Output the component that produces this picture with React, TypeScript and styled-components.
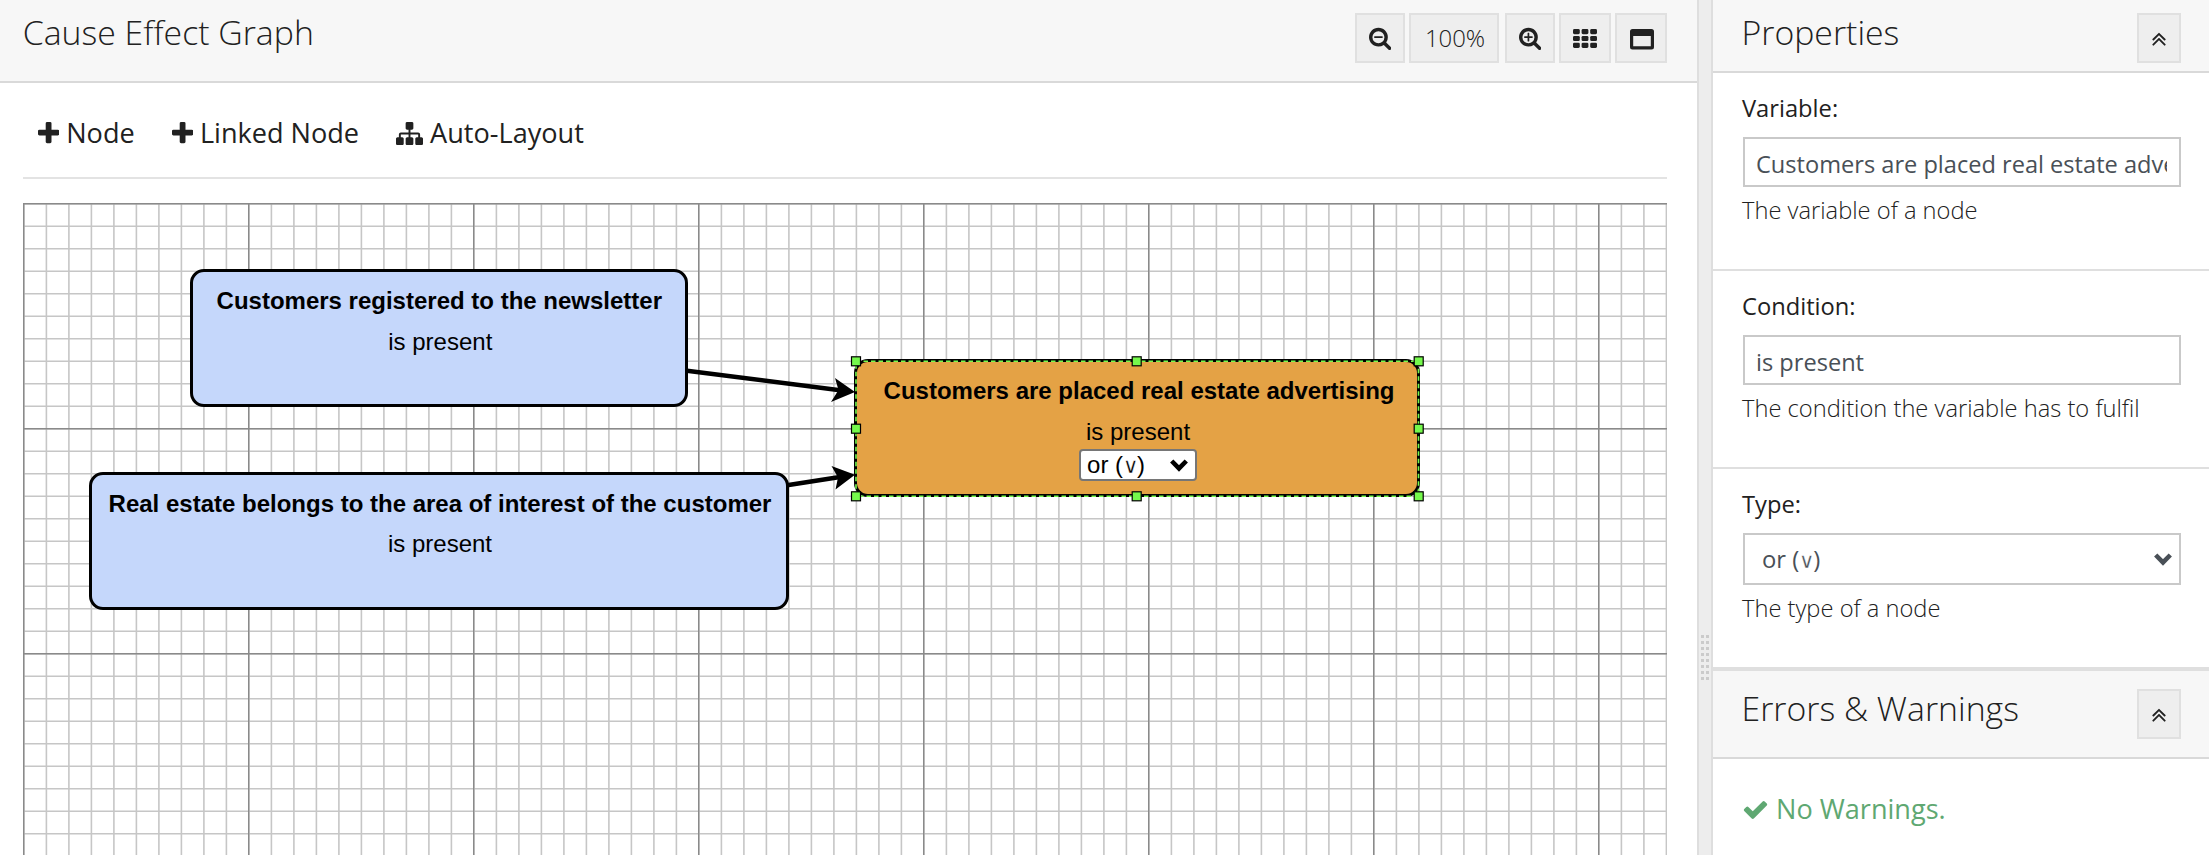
import React from 'react';
import styled, { createGlobalStyle } from 'styled-components';

const GlobalStyle = createGlobalStyle`
  *, *::before, *::after { box-sizing: border-box; }
  body {
    margin: 0;
    overflow: hidden;
    background: #fff;
    color: #212121;
    font-family: "Open Sans", sans-serif;
  }
`;

const Page = styled.div`
  display: flex;
  width: 100vw;
  height: 100vh;
  overflow: hidden;
`;

const EditorPane = styled.main`
  flex: 1;
  min-width: 0;
  display: flex;
  flex-direction: column;
`;

const PaneHeader = styled.header<{ $height: number; $top: number; $left: number; $right: number }>`
  display: flex;
  justify-content: space-between;
  align-items: flex-start;
  flex: none;
  height: ${(p) => p.$height}px;
  padding: ${(p) => p.$top}px ${(p) => p.$right}px 0 ${(p) => p.$left}px;
  background: #f7f7f7;
  border-bottom: 2px solid #d9d9d9;
`;

const Title = styled.h1`
  margin: 0;
  font-size: 33.8px;
  line-height: 46px;
  font-weight: 300;
  white-space: nowrap;
`;

const ButtonRow = styled.div`
  display: flex;
  margin-top: 4px;
`;

const HeaderButton = styled.button<{ $width: number; $gap?: number }>`
  display: flex;
  align-items: center;
  justify-content: center;
  width: ${(p) => p.$width}px;
  height: 50px;
  margin: 0 0 0 ${(p) => p.$gap ?? 0}px;
  padding: 0;
  border: 2px solid #e0e0e0;
  background: #eee;
  color: #212121;
  font: 300 23.9px/32px "Open Sans", sans-serif;
`;

const ZoomValue = styled.span`
  padding-left: 2px;
`;

const Workspace = styled.section`
  flex: 1;
  min-height: 0;
  display: flex;
  flex-direction: column;
  padding: 0 30px 0 23px;
`;

const Toolbar = styled.nav`
  display: flex;
  flex: none;
  gap: 37px;
  height: 96px;
  padding: 31px 0 0 15px;
  border-bottom: 2px solid #e3e3e3;
`;

const ToolItem = styled.a`
  display: flex;
  align-items: center;
  gap: 7px;
  height: 37px;
  font-size: 27.1px;
  line-height: 37px;
  white-space: nowrap;
`;

const Canvas = styled.div`
  position: relative;
  flex: 1;
  min-height: 0;
  margin-top: 24px;
  overflow: hidden;
`;

const Layer = styled.svg`
  position: absolute;
  left: 0;
  top: 0;
  width: 100%;
  height: 100%;
`;

const Node = styled.div<{ $x: number; $y: number; $w: number; $fill: string }>`
  position: absolute;
  left: ${(p) => p.$x}px;
  top: ${(p) => p.$y}px;
  width: ${(p) => p.$w}px;
  height: 138px;
  display: flex;
  flex-direction: column;
  align-items: center;
  padding: 15px 0 0 2px;
  border: 3px solid #000;
  border-radius: 14px;
  background: ${(p) => p.$fill};
  color: #000;
  font-family: "Liberation Sans", Arial, sans-serif;
  font-size: 24px;
  line-height: 28px;
  white-space: nowrap;
`;

const NodeTitle = styled.strong<{ $indent?: number; $outdent?: number }>`
  padding: 0 ${(p) => p.$outdent ?? 0}px 0 ${(p) => p.$indent ?? 0}px;
  font-weight: 700;
`;

const NodeCondition = styled.span<{ $gap?: number }>`
  margin-top: ${(p) => p.$gap ?? 13}px;
`;

const NodeSelect = styled.div`
  display: flex;
  align-items: center;
  justify-content: space-between;
  width: 118px;
  height: 32px;
  margin-top: 3px;
  padding: 0 7px 0 6px;
  border: 2px solid #767676;
  border-radius: 4px;
  background: #fff;
`;

const OrGlyph = styled.span`
  display: inline-block;
  margin: 0 -0.5px;
  font-family: "DejaVu Sans", sans-serif;
  font-weight: 200;
  font-size: 21px;
  line-height: 1;
  -webkit-text-stroke: 0.3px #fff;
`;

const Splitter = styled.div`
  display: flex;
  align-items: center;
  justify-content: center;
  flex: none;
  width: 16px;
  padding-top: 460px;
  border: solid #dedede;
  border-width: 0 2px;
  background: #ededed;
`;

const Grip = styled.div`
  display: grid;
  grid-template-columns: 3px 3px;
  gap: 3.14px 2px;
`;

const GripDot = styled.i`
  height: 3px;
  background: #cbcbcb;
`;

const SidePane = styled.aside`
  display: flex;
  flex-direction: column;
  flex: none;
  width: 496px;
`;

const Field = styled.section<{ $last?: boolean }>`
  display: flex;
  flex-direction: column;
  flex: none;
  height: ${(p) => (p.$last ? 202 : 198)}px;
  padding: 19px 28px 0 29px;
  border-bottom: ${(p) => (p.$last ? 4 : 2)}px solid #dfdfdf;
`;

const FieldLabel = styled.label`
  margin-bottom: 13px;
  font-size: 23.7px;
  line-height: 32px;
`;

const FieldInput = styled.input`
  width: 438px;
  height: 50px;
  margin: 0 0 0 1px;
  padding: 3px 12px 0 11px;
  border: 2px solid #c9c9c9;
  border-radius: 0;
  outline: none;
  background: #fff;
  color: #495057;
  font: 400 23.6px/32px "Open Sans", sans-serif;
`;

const FieldSelect = styled.div`
  display: flex;
  align-items: center;
  justify-content: space-between;
  width: 438px;
  height: 52px;
  margin-left: 1px;
  padding: 0 7px 0 17px;
  border: 2px solid #c9c9c9;
  color: #495057;
  font-size: 23.8px;
  line-height: 32px;
`;

const Help = styled.p`
  margin: 7px 0 0;
  font-size: 23.7px;
  line-height: 32px;
  font-weight: 300;
  white-space: nowrap;
`;

const Status = styled.div`
  display: flex;
  align-items: center;
  gap: 7px;
  padding: 31px 0 0 29px;
  color: #5fa872;
  font-size: 27.1px;
  line-height: 37px;
`;

const IconSvg = styled.svg<{ $dy?: number }>`
  display: block;
  flex: none;
  margin-top: ${(p) => p.$dy ?? 0}px;
`;

const GLYPHS = {
  plus: [
    1408,
    'M1408 736v192q0 40-28 68t-68 28h-416v416q0 40-28 68t-68 28h-192q-40 0-68-28t-28-68v-416h-416q-40 0-68-28t-28-68v-192q0-40 28-68t68-28h416v-416q0-40 28-68t68-28h192q40 0 68 28t28 68v416h416q40 0 68 28t28 68z',
  ],
  sitemap: [
    1792,
    'M1792 1248v320q0 40-28 68t-68 28h-320q-40 0-68-28t-28-68v-320q0-40 28-68t68-28h96v-192h-512v192h96q40 0 68 28t28 68v320q0 40-28 68t-68 28h-320q-40 0-68-28t-28-68v-320q0-40 28-68t68-28h96v-192h-512v192h96q40 0 68 28t28 68v320q0 40-28 68t-68 28h-320q-40 0-68-28t-28-68v-320q0-40 28-68t68-28h96v-192q0-52 38-90t90-38h512v-192h-96q-40 0-68-28t-28-68v-320q0-40 28-68t68-28h320q40 0 68 28t28 68v320q0 40-28 68t-68 28h-96v192h512q52 0 90 38t38 90v192h96q40 0 68 28t28 68z',
  ],
  zoomOut: [
    1664,
    'M1024 800v64q0 13-9.500 22.500t-22.500 9.500h-576q-13 0-22.500-9.500t-9.500-22.500v-64q0-13 9.500-22.500t22.500-9.500h576q13 0 22.500 9.500t9.500 22.500zM1152 832q0-185-131.500-316.500t-316.500-131.500-316.500 131.500-131.500 316.500 131.500 316.500 316.500 131.500 316.500-131.500 131.500-316.500zM1664 1664q0 53-37.500 90.500t-90.500 37.500q-54 0-90-38l-343-342q-179 124-399 124-143 0-273.500-55.500t-225-150-150-225-55.500-273.500 55.500-273.500 150-225 225-150 273.500-55.500 273.500 55.500 225 150 150 225 55.500 273.500q0 220-124 399l343 343q37 37 37 90z',
  ],
  zoomIn: [
    1664,
    'M1024 800v64q0 13-9.500 22.500t-22.500 9.500h-224v224q0 13-9.500 22.500t-22.500 9.500h-64q-13 0-22.500-9.500t-9.500-22.500v-224h-224q-13 0-22.500-9.500t-9.500-22.500v-64q0-13 9.500-22.500t22.500-9.500h224v-224q0-13 9.500-22.500t22.500-9.500h64q13 0 22.500 9.500t9.500 22.500v224h224q13 0 22.500 9.500t9.500 22.500zM1152 832q0-185-131.500-316.500t-316.500-131.500-316.500 131.500-131.500 316.500 131.500 316.500 316.500 131.500 316.500-131.500 131.500-316.500zM1664 1664q0 53-37.500 90.500t-90.500 37.500q-54 0-90-38l-343-342q-179 124-399 124-143 0-273.500-55.500t-225-150-150-225-55.500-273.500 55.500-273.500 150-225 225-150 273.500-55.500 273.500 55.500 225 150 150 225 55.500 273.500q0 220-124 399l343 343q37 37 37 90z',
  ],
  check: [
    1792,
    'M1671 566q0 40-28 68l-724 724-136 136q-28 28-68 28t-68-28l-136-136-362-362q-28-28-28-68t28-68l136-136q28-28 68-28t68 28l294 295 656-657q28-28 68-28t68 28l136 136q28 28 28 68z',
  ],
  doubleUp: [
    1792,
    'M1395 1312q0 13-10 23l-50 50q-10 10-23 10t-23-10l-393-393-393 393q-10 10-23 10t-23-10l-50-50q-10-10-10-23t10-23l466-466q10-10 23-10t23 10l466 466q10 10 10 23zM1395 928q0 13-10 23l-50 50q-10 10-23 10t-23-10l-393-393-393 393q-10 10-23 10t-23-10l-50-50q-10-10-10-23t10-23l466-466q10-10 23-10t23 10l466 466q10 10 10 23z',
  ],
} as const;

function Icon({ name, size, dy }: { name: keyof typeof GLYPHS; size: number; dy?: number }) {
  const [w, d] = GLYPHS[name];
  return (
    <IconSvg $dy={dy} width={(w / 1792) * size} height={size} viewBox={`0 0 ${w} 1792`} fill="currentColor">
      <path d={d} fillRule="evenodd" />
    </IconSvg>
  );
}

function Chevron() {
  return (
    <IconSvg width="18" height="13" viewBox="0 0 18 13">
      <path d="M1.700 2l7.300 7.400L16.300 2" fill="none" stroke="currentColor" strokeWidth="4.600" />
    </IconSvg>
  );
}

function GridIcon() {
  return (
    <IconSvg width="24" height="19" viewBox="0 0 24 19" fill="currentColor">
      {[0, 6.9, 13.7].map((y) =>
        [0, 8.600, 17.200].map((x) => <rect key={`${x}-${y}`} x={x} y={y} width="6.800" height="5.200" rx="1.400" />),
      )}
    </IconSvg>
  );
}

function WindowIcon() {
  return (
    <IconSvg $dy={2} width="25" height="21" viewBox="-1 0 25 21">
      <path
        d="M2.500 0h19q2.500 0 2.500 2.500v15.500q0 2.500-2.500 2.500h-19q-2.500 0-2.500-2.500v-15.500q0-2.500 2.500-2.500zM3.200 7v10.300h17.600v-10.300z"
        fill="currentColor"
        fillRule="evenodd"
      />
    </IconSvg>
  );
}

const HANDLES = [
  [833, 158.3], [1113.7, 158.3], [1395.7, 158.3],
  [833, 225.7], [1395.7, 225.7],
  [833, 293.3], [1113.7, 293.3], [1395.7, 293.3],
];

const MINOR_X = Array.from({ length: 74 }, (_, i) => i);
const MINOR_Y = Array.from({ length: 30 }, (_, i) => i);

function Grid() {
  return (
    <Layer>
      <g stroke="#c6c6c6" strokeWidth="1.600">
        {MINOR_X.map((i) => <line key={`x${i}`} x1={i * 22.5 + 0.9} x2={i * 22.5 + 0.9} y1="0" y2="700" />)}
        {MINOR_Y.map((i) => <line key={`y${i}`} y1={i * 22.5 + 0.8} y2={i * 22.5 + 0.8} x1="0" x2="1644" />)}
      </g>
      <g stroke="#8a8a8a" strokeWidth="1.400">
        {MINOR_X.filter((i) => i % 10 === 0).map((i) => (
          <line key={`x${i}`} x1={i * 22.5 + 0.7} x2={i * 22.5 + 0.7} y1="0" y2="700" />
        ))}
        {MINOR_Y.filter((i) => i % 10 === 0).map((i) => (
          <line key={`y${i}`} y1={i * 22.5 + 0.7} y2={i * 22.5 + 0.7} x1="0" x2="1644" />
        ))}
      </g>
    </Layer>
  );
}

function Edges() {
  return (
    <Layer>
      <g stroke="#000" strokeWidth="4.500">
        <line x1="664" y1="167.800" x2="817" y2="187.200" />
        <line x1="764" y1="282.300" x2="817" y2="274" />
      </g>
      <path d="M832 189L812 175L815.500 187L808 199Z" />
      <path d="M832 271.800L808.500 263L815 274.500L812.500 286.500Z" />
    </Layer>
  );
}

function Selection() {
  return (
    <Layer>
      <rect x="833" y="158.300" width="562.500" height="135" fill="none" stroke="#75f94c" strokeWidth="1.600" strokeDasharray="4.500 3" />
      {HANDLES.map(([x, y]) => (
        <rect key={`${x}-${y}`} x={x - 4.5} y={y - 4.5} width="9" height="9" fill="#75f94c" stroke="#000" strokeWidth="1.200" />
      ))}
    </Layer>
  );
}

function OrText() {
  return <span>or (<OrGlyph>∨</OrGlyph>)</span>;
}

export default function App() {
  return (
    <Page>
      <GlobalStyle />
      <EditorPane>
        <PaneHeader $height={83} $top={9} $left={22.7} $right={30}>
          <Title>Cause Effect Graph</Title>
          <ButtonRow>
            <HeaderButton $width={50}><Icon name="zoomOut" size={24} dy={0} /></HeaderButton>
            <HeaderButton $width={90} $gap={4}><ZoomValue>100%</ZoomValue></HeaderButton>
            <HeaderButton $width={50} $gap={6}><Icon name="zoomIn" size={24} dy={0} /></HeaderButton>
            <HeaderButton $width={52} $gap={4}><GridIcon /></HeaderButton>
            <HeaderButton $width={52} $gap={4}><WindowIcon /></HeaderButton>
          </ButtonRow>
        </PaneHeader>
        <Workspace>
          <Toolbar>
            <ToolItem><Icon name="plus" size={27} dy={1} />Node</ToolItem>
            <ToolItem><Icon name="plus" size={27} dy={1} />Linked Node</ToolItem>
            <ToolItem><Icon name="sitemap" size={27} dy={1} />Auto-Layout</ToolItem>
          </Toolbar>
          <Canvas>
            <Grid />
            <Edges />
            <Node $x={167.300} $y={66} $w={498} $fill="#c5d7fb">
              <NodeTitle $outdent={2}>Customers registered to the newsletter</NodeTitle>
              <NodeCondition>is present</NodeCondition>
            </Node>
            <Node $x={66} $y={269} $w={700} $fill="#c5d7fb">
              <NodeTitle>Real estate belongs to the area of interest of the customer</NodeTitle>
              <NodeCondition $gap={12}>is present</NodeCondition>
            </Node>
            <Node $x={831.300} $y={156} $w={565.500} $fill="#e4a245">
              <NodeTitle $indent={2}>Customers are placed real estate advertising</NodeTitle>
              <NodeCondition>is present</NodeCondition>
              <NodeSelect><OrText /><Chevron /></NodeSelect>
            </Node>
            <Selection />
          </Canvas>
        </Workspace>
      </EditorPane>
      <Splitter>
        <Grip>{Array.from({ length: 16 }, (_, i) => <GripDot key={i} />)}</Grip>
      </Splitter>
      <SidePane>
        <PaneHeader $height={73} $top={9} $left={28.500} $right={28}>
          <Title>Properties</Title>
          <ButtonRow><HeaderButton $width={44}><Icon name="doubleUp" size={24} dy={2} /></HeaderButton></ButtonRow>
        </PaneHeader>
        <Field>
          <FieldLabel>Variable:</FieldLabel>
          <FieldInput defaultValue="Customers are placed real estate advertising" />
          <Help>The variable of a node</Help>
        </Field>
        <Field>
          <FieldLabel>Condition:</FieldLabel>
          <FieldInput defaultValue="is present" />
          <Help>The condition the variable has to fulfil</Help>
        </Field>
        <Field $last>
          <FieldLabel>Type:</FieldLabel>
          <FieldSelect><OrText /><Chevron /></FieldSelect>
          <Help>The type of a node</Help>
        </Field>
        <PaneHeader $height={88} $top={14} $left={28.500} $right={28}>
          <Title>Errors &amp; Warnings</Title>
          <ButtonRow><HeaderButton $width={44}><Icon name="doubleUp" size={24} dy={2} /></HeaderButton></ButtonRow>
        </PaneHeader>
        <Status><Icon name="check" size={27} dy={2} />No Warnings.</Status>
      </SidePane>
    </Page>
  );
}
